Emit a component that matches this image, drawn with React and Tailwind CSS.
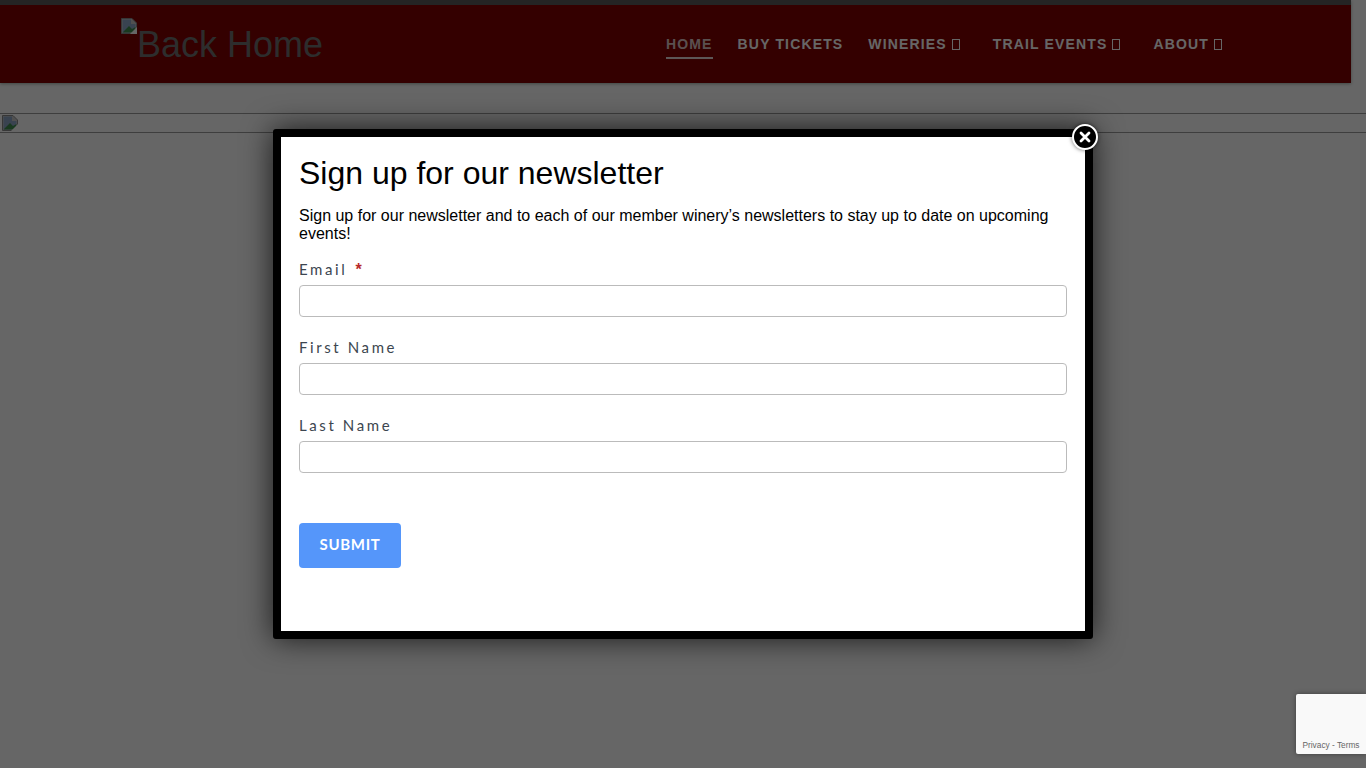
import React from "react";

const sans = "font-['Liberation_Sans',Arial,sans-serif]";
const formFont = "font-['Lato','Open_Sans',sans-serif]";

const BrokenImage = () => (
    <svg width="16" height="16" viewBox="0 0 16 16" className="shrink-0">
        <path d="M0.5 0.5H11L15.5 5V15.5H0.5Z" fill="#c8c8c8" stroke="#8a8a8a" />
        <path d="M1.5 1.5H10V6H14.5V9L9 14.5H1.5Z" fill="#8fa8c8" />
        <path d="M1.5 14.5L8 8L11 11L14.5 9V14.5Z" fill="#3f8f4f" />
        <path d="M9 16L16 9V16Z" fill="#ffffff" />
    </svg>
);

const NavItem = ({ label, active, caret }) => (
    <a
        className={`flex h-[30px] items-start pt-[5px] text-sm leading-[20px] font-bold tracking-[1.15px] uppercase ${
            active ? "border-b-2 border-[#e8d8d8] text-[#e0c8c8]" : "text-white"
        } ${caret ? "pr-[8px]" : ""}`}
    >
        {label}
        {caret && (
            <span className="mt-[5px] ml-[5px] inline-block h-[11px] w-[8px] border border-white"></span>
        )}
    </a>
);

const Field = ({ label, required }) => (
    <div className="mb-[13px]">
        <label
            className={`block h-[33px] pt-[5px] text-[15px] leading-[24px] tracking-[2.6px] text-[#3c4650] ${formFont}`}
        >
            {label}
            {required && (
                <span className={`ml-[8px] text-base font-bold text-[#b82a2a] ${sans}`}>*</span>
            )}
        </label>
        <input className="block h-[32px] w-full rounded-[4px] border border-[#bbbbbb] bg-white" />
    </div>
);

const App = () => {
    return (
        <div className={`relative h-screen w-full overflow-hidden bg-white ${sans}`}>
            {/* page behind the popup */}
            <div className="w-[1351px]">
                <header className="flex h-[83px] items-center border-t-[5px] border-[#5a5a5a] bg-[#830000] pr-[121px] pl-[121px] shadow-[0_1px_3px_rgba(120,140,130,0.7)]">
                    <div className="flex self-start pt-[13px]">
                        <BrokenImage />
                        <span className="mt-[6px] text-[36px] leading-[41px] text-[#707070]">
                            Back Home
                        </span>
                    </div>
                    <nav className="ml-auto flex items-center gap-[25px]">
                        <NavItem label="Home" active />
                        <NavItem label="Buy Tickets" />
                        <NavItem label="Wineries" caret />
                        <NavItem label="Trail Events" caret />
                        <NavItem label="About" caret />
                    </nav>
                </header>
            </div>
            <div className="mt-[30px] h-[20px] border-y border-[#9c9c9c] pt-[1px] pl-[2px]">
                <BrokenImage />
            </div>

            {/* dimmed overlay */}
            <div className="absolute inset-0 flex justify-center bg-black/60 pt-[129px]">
                <div className="relative h-[510px] w-[820px] rounded-[3px] border-[8px] border-black bg-white shadow-[0_0_30px_rgba(0,0,0,0.75)]">
                    <button className="absolute -top-[13px] -right-[13px] flex h-[26px] w-[26px] items-center justify-center rounded-full border-2 border-white bg-black shadow-[0_0_4px_rgba(0,0,0,0.6)]">
                        <svg width="12" height="12" viewBox="0 0 12 12">
                            <path
                                d="M2 2L10 10M10 2L2 10"
                                stroke="#ffffff"
                                strokeWidth="2.8"
                                strokeLinecap="round"
                            />
                        </svg>
                    </button>
                    <div className="px-[18px] pt-[18px]">
                        <h2 className="text-[32px] leading-[36px] text-black">
                            Sign up for our newsletter
                        </h2>
                        <p className="mt-[16px] mb-[9px] text-base leading-[18px] text-black">
                            Sign up for our newsletter and to each of our member winery’s
                            newsletters to stay up to date on upcoming events!
                        </p>
                        <Field label="Email" required />
                        <Field label="First Name" />
                        <Field label="Last Name" />
                        <button
                            className={`mt-[37px] h-[45px] w-[102px] rounded-[4px] bg-[#5596fa] pb-[2px] text-[15px] font-bold tracking-[0.7px] text-white ${formFont}`}
                        >
                            SUBMIT
                        </button>
                    </div>
                </div>
            </div>

            {/* recaptcha badge */}
            <div className="absolute right-0 bottom-[14px] flex h-[60px] w-[70px] items-end justify-center rounded-l-[2px] bg-[#f9f9f9] pb-[4px] shadow-[0_0_5px_rgba(0,0,0,0.4)]">
                <span className="text-[8.3px] leading-[10px] whitespace-nowrap text-[#666666]">
                    Privacy - Terms
                </span>
            </div>
        </div>
    );
};

export default App;
